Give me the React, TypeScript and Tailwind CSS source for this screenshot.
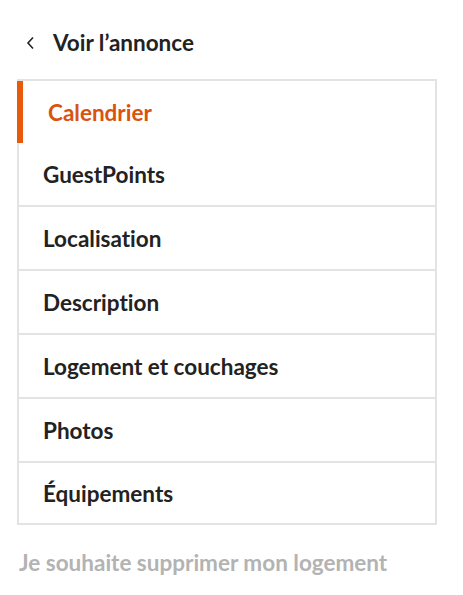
import React from "react";

const items = [
  "Calendrier",
  "GuestPoints",
  "Localisation",
  "Description",
  "Logement et couchages",
  "Photos",
  "Équipements",
];

export default function App() {
  return (
    <div
      className="min-h-[595px] w-[463px] bg-white px-[17px] pt-[29px] [font-variant-ligatures:none]"
      style={{ fontFamily: "Lato, 'Open Sans', sans-serif" }}
    >
      <div className="flex h-[28px] items-center">
        <svg width="10" height="14" viewBox="0 0 10 14" className="ml-[9px] mr-[17px]">
          <path d="M7 1.5 L2 7 L7 12.5" fill="none" stroke="#222" strokeWidth="1.6" />
        </svg>
        <span className="text-[22.5px] font-bold leading-[28px] text-[#222]">Voir l’annonce</span>
      </div>
      <div className="mt-[22px] w-[420px] border-y-2 border-r-2 border-[#e3e3e3]">
        {items.map((label, i) => {
          const active = i === 0;
          return (
            <div
              key={label}
              className={
                "flex items-center box-content pt-[2px] " +
                (i === items.length - 1 ? "h-[58px] " : "h-[60px] ") +
                (active
                  ? "border-l-[6px] border-[#e8590c] pl-[25px]"
                  : "border-l-2 border-[#e3e3e3] pl-[24px]") +
                (i > 1 ? " border-t-2" : "")
              }
            >
              <span
                className={
                  "text-[22.5px] font-bold leading-[28px] " +
                  (active ? "text-[#d9530f]" : "text-[#222]")
                }
              >
                {label}
              </span>
            </div>
          );
        })}
      </div>
      <div className="mt-[24px] pl-[2px] text-[22.5px] font-bold leading-[28px] text-[#b3b3b3]">
        Je souhaite supprimer mon logement
      </div>
    </div>
  );
}
